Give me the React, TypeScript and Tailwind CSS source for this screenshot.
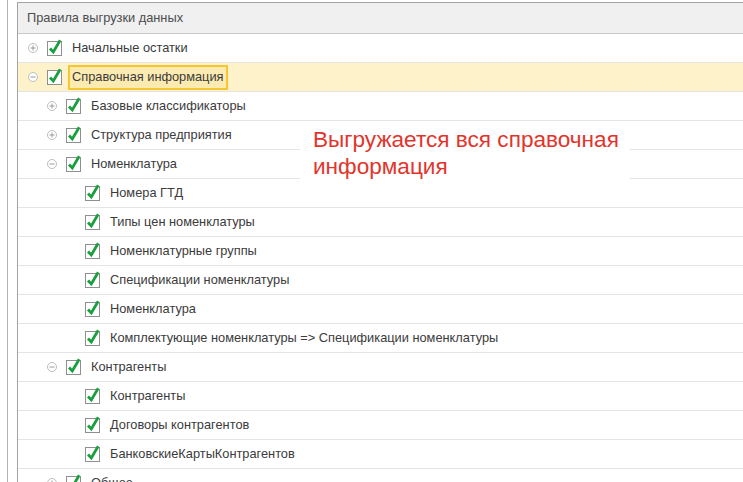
import React from "react";

interface Row {
  label: string;
  level: 0 | 1 | 2;
  toggle?: "plus" | "minus";
  active?: boolean;
}

const rows: Row[] = [
  { label: "Начальные остатки", level: 0, toggle: "plus" },
  { label: "Справочная информация", level: 0, toggle: "minus", active: true },
  { label: "Базовые классификаторы", level: 1, toggle: "plus" },
  { label: "Структура предприятия", level: 1, toggle: "plus" },
  { label: "Номенклатура", level: 1, toggle: "minus" },
  { label: "Номера ГТД", level: 2 },
  { label: "Типы цен номенклатуры", level: 2 },
  { label: "Номенклатурные группы", level: 2 },
  { label: "Спецификации номенклатуры", level: 2 },
  { label: "Номенклатура", level: 2 },
  { label: "Комплектующие номенклатуры => Спецификации номенклатуры", level: 2 },
  { label: "Контрагенты", level: 1, toggle: "minus" },
  { label: "Контрагенты", level: 2 },
  { label: "Договоры контрагентов", level: 2 },
  { label: "БанковскиеКартыКонтрагентов", level: 2 },
  { label: "Общее", level: 1, toggle: "plus" },
];

const indent = ["pl-[10px]", "pl-[29px]", "pl-[48px]"];

function Toggle({ kind }: { kind?: "plus" | "minus" }) {
  if (!kind) return <span className="w-[10px] shrink-0" />;
  return (
    <svg width="10" height="10" viewBox="0 0 10 10" className="shrink-0">
      <circle cx="5" cy="5" r="4.5" fill="white" stroke="#bdbdbd" />
      <line x1="2.5" y1="5" x2="7.5" y2="5" stroke="#9a9a9a" />
      {kind === "plus" && <line x1="5" y1="2.5" x2="5" y2="7.5" stroke="#9a9a9a" />}
    </svg>
  );
}

function Check() {
  return (
    <svg width="16" height="18" viewBox="0 0 16 18" className="ml-[9px] shrink-0">
      <rect x="0.5" y="2.5" width="14" height="14" fill="white" stroke="#8f8f8f" />
      <path d="M3 9.5 L6.3 13 L13.2 1.3" fill="none" stroke="#1a9f3f" strokeWidth="2.8" />
    </svg>
  );
}

export default function App() {
  return (
    <div
      className="relative flex h-[482px] w-[743px] overflow-hidden bg-white"
      style={{ fontFamily: '"Liberation Sans", Arial, sans-serif' }}
    >
      <div className="w-[7px] shrink-0" />
      <div className="w-px shrink-0 bg-[#b4b4b4]" />
      <div className="w-[9px] shrink-0" />
      <div className="mt-[2px] flex-1 border-l border-t border-[#a3a3a3]">
        <div className="flex h-[31px] items-center border-b border-[#c9c9c9] bg-[#f0f0f0] pl-[9px] text-[12.8px] text-[#4d4d4d]">
          Правила выгрузки данных
        </div>
        {rows.map((r, i) => (
          <div
            key={i}
            className={`flex h-[29px] items-center border-b border-[#e4e4e4] ${indent[r.level]} ${
              r.active ? "bg-[#fdf2c9]" : ""
            }`}
          >
            <Toggle kind={r.toggle} />
            <Check />
            <span
              className={`ml-[5px] flex h-[25px] items-center whitespace-nowrap border-2 px-[2px] text-[12.8px] text-[#3b3b3b] ${
                r.active ? "border-[#f6c532] bg-[#fcebb0]" : "border-transparent"
              }`}
            >
              {r.label}
            </span>
          </div>
        ))}
      </div>
      <div className="absolute left-[300px] top-[123px] h-[57px] w-[330px] bg-white pl-[13px] pt-[3px] text-[22.6px] leading-[27px] text-[#e3342c]">
        Выгружается вся справочная
        <br />
        информация
      </div>
    </div>
  );
}
